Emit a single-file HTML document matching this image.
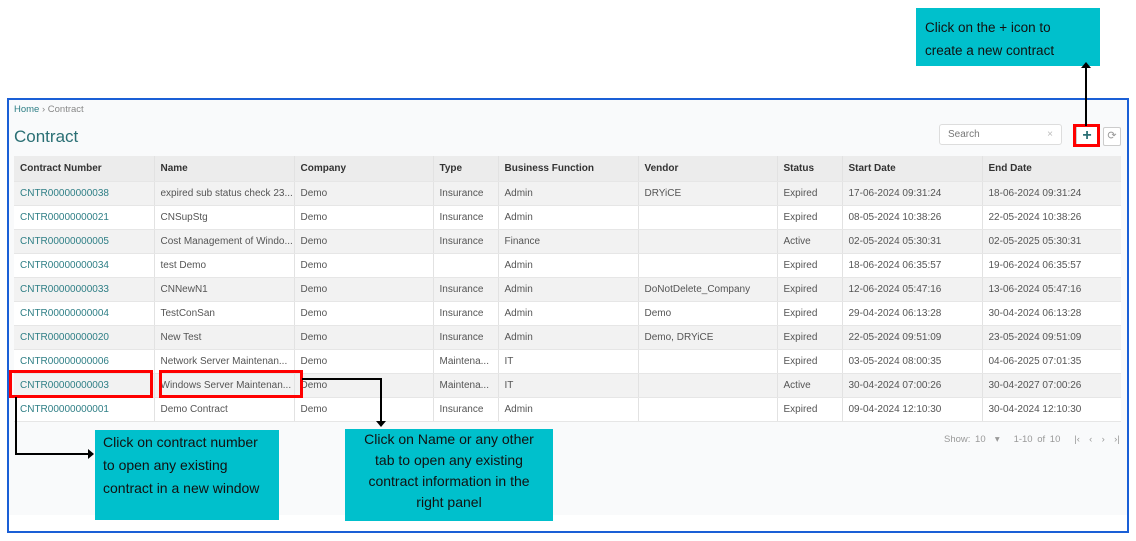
<!DOCTYPE html>
<html><head><style>
*{margin:0;padding:0;box-sizing:border-box}
body{width:1136px;height:541px;background:#fff;font-family:"Liberation Sans",sans-serif;position:relative;overflow:hidden}
.a{position:absolute}
.frame{left:7px;top:98px;width:1122px;height:435px;border:2px solid #1a5fd6;background:#fff}
.panel{left:9px;top:100px;width:1118px;height:415px;background:#f9fafb}
table{position:absolute;left:14px;top:156px;width:1107px;border-collapse:collapse;font-size:10px;color:#555;table-layout:fixed}
td,th{height:24px;padding:0 6px;border-right:1px solid #e2e2e2;border-bottom:1px solid #e6e6e6;text-align:left;white-space:nowrap;overflow:hidden}
td:last-child,th:last-child{border-right:none}
th{background:#ececec;color:#333;font-weight:bold;height:25px}
tr:nth-child(even) td{background:#f2f2f2}
tr:nth-child(odd) td{background:#fff}
td.l{color:#2f7f86}
.cy{background:#00c0cc;color:#111;font-size:14px;line-height:23px;white-space:nowrap}
.red{border:3px solid #f00}
.ln{background:#000}
</style></head><body>
<div class="a cy" style="left:916px;top:8px;width:184px;height:58px;padding:8px 9px;line-height:23px;font-size:13.5px">Click on the + icon to<br>create a new contract</div>
<div class="a frame"></div>
<div class="a panel"></div>
<div class="a" style="left:14px;top:104px;font-size:9.5px;color:#888"><span style="color:#2f7f86">Home</span> › Contract</div>
<div class="a" style="left:14px;top:127px;font-size:17px;color:#2a6f74">Contract</div>
<div class="a" style="left:939px;top:124px;width:123px;height:21px;border:1px solid #ddd;border-radius:3px;background:#fff;font-size:10px;color:#777;padding:4px 8px">Search<span style="float:right;color:#bbb">×</span></div>
<div class="a" style="left:1076px;top:126px;width:22px;height:20px;background:#fff;border:1px solid #ccc;color:#2a6f74;font-size:16px;font-weight:bold;text-align:center;line-height:18px">+</div>
<div class="a red" style="left:1073px;top:124px;width:27px;height:23px"></div>
<div class="a" style="left:1103px;top:127px;width:18px;height:19px;border:1px solid #ccc;border-radius:2px;background:#fff;color:#999;font-size:11px;text-align:center;line-height:17px">⟳</div>
<table>
<colgroup><col width="140"><col width="140"><col width="139"><col width="65"><col width="140"><col width="139"><col width="65"><col width="140"><col width="139"></colgroup>
<tr><th>Contract Number</th><th>Name</th><th>Company</th><th>Type</th><th>Business Function</th><th>Vendor</th><th>Status</th><th>Start Date</th><th>End Date</th></tr>
<tr><td class="l">CNTR00000000038</td><td>expired sub status check 23...</td><td>Demo</td><td>Insurance</td><td>Admin</td><td>DRYiCE</td><td>Expired</td><td>17-06-2024 09:31:24</td><td>18-06-2024 09:31:24</td></tr>
<tr><td class="l">CNTR00000000021</td><td>CNSupStg</td><td>Demo</td><td>Insurance</td><td>Admin</td><td></td><td>Expired</td><td>08-05-2024 10:38:26</td><td>22-05-2024 10:38:26</td></tr>
<tr><td class="l">CNTR00000000005</td><td>Cost Management of Windo...</td><td>Demo</td><td>Insurance</td><td>Finance</td><td></td><td>Active</td><td>02-05-2024 05:30:31</td><td>02-05-2025 05:30:31</td></tr>
<tr><td class="l">CNTR00000000034</td><td>test Demo</td><td>Demo</td><td></td><td>Admin</td><td></td><td>Expired</td><td>18-06-2024 06:35:57</td><td>19-06-2024 06:35:57</td></tr>
<tr><td class="l">CNTR00000000033</td><td>CNNewN1</td><td>Demo</td><td>Insurance</td><td>Admin</td><td>DoNotDelete_Company</td><td>Expired</td><td>12-06-2024 05:47:16</td><td>13-06-2024 05:47:16</td></tr>
<tr><td class="l">CNTR00000000004</td><td>TestConSan</td><td>Demo</td><td>Insurance</td><td>Admin</td><td>Demo</td><td>Expired</td><td>29-04-2024 06:13:28</td><td>30-04-2024 06:13:28</td></tr>
<tr><td class="l">CNTR00000000020</td><td>New Test</td><td>Demo</td><td>Insurance</td><td>Admin</td><td>Demo, DRYiCE</td><td>Expired</td><td>22-05-2024 09:51:09</td><td>23-05-2024 09:51:09</td></tr>
<tr><td class="l">CNTR00000000006</td><td>Network Server Maintenan...</td><td>Demo</td><td>Maintena...</td><td>IT</td><td></td><td>Expired</td><td>03-05-2024 08:00:35</td><td>04-06-2025 07:01:35</td></tr>
<tr><td class="l">CNTR00000000003</td><td>Windows Server Maintenan...</td><td>Demo</td><td>Maintena...</td><td>IT</td><td></td><td>Active</td><td>30-04-2024 07:00:26</td><td>30-04-2027 07:00:26</td></tr>
<tr><td class="l">CNTR00000000001</td><td>Demo Contract</td><td>Demo</td><td>Insurance</td><td>Admin</td><td></td><td>Expired</td><td>09-04-2024 12:10:30</td><td>30-04-2024 12:10:30</td></tr>
</table>
<div class="a" style="left:944px;top:434px;font-size:9.5px;color:#999;word-spacing:2px">Show: 10 &nbsp;▾ &nbsp; 1-10 of 10 &nbsp; |‹ &nbsp;‹ &nbsp;› &nbsp;›|</div>
<div class="a red" style="left:9px;top:370px;width:144px;height:28px"></div>
<div class="a red" style="left:159px;top:370px;width:144px;height:28px"></div>
<div class="a ln" style="left:1085px;top:66px;width:2px;height:60px"></div>
<div class="a" style="left:1081px;top:62px;width:0;height:0;border-left:5px solid transparent;border-right:5px solid transparent;border-bottom:6px solid #000"></div>
<div class="a ln" style="left:15px;top:397px;width:2px;height:57px"></div>
<div class="a ln" style="left:15px;top:453px;width:75px;height:2px"></div>
<div class="a" style="left:88px;top:449px;width:0;height:0;border-top:5px solid transparent;border-bottom:5px solid transparent;border-left:6px solid #000"></div>
<div class="a ln" style="left:302px;top:378px;width:80px;height:2px"></div>
<div class="a ln" style="left:380px;top:378px;width:2px;height:45px"></div>
<div class="a" style="left:376px;top:421px;width:0;height:0;border-left:5px solid transparent;border-right:5px solid transparent;border-top:6px solid #000"></div>
<div class="a cy" style="left:95px;top:430px;width:184px;height:90px;padding:1px 8px;font-size:14px">Click on contract number<br>to open any existing<br>contract in a new window</div>
<div class="a cy" style="left:345px;top:429px;width:208px;height:92px;padding:0 4px;text-align:center;font-size:14px;line-height:21px">Click on Name or any other<br>tab to open any existing<br>contract information in the<br>right panel</div>
</body></html>
